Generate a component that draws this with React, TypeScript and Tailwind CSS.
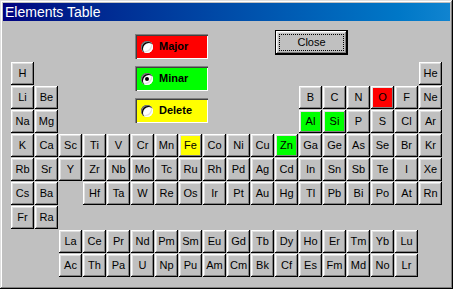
import React from 'react';

const RED = ['O'];
const GREEN = ['Al', 'Si', 'Zn'];
const YELLOW = ['Fe'];

const Cell = ({ sym }: { sym: string }) => {
  let bg = 'bg-[#c0c0c0]';
  if (RED.includes(sym)) bg = 'bg-[#ff0000]';
  if (GREEN.includes(sym)) bg = 'bg-[#00ff00]';
  if (YELLOW.includes(sym)) bg = 'bg-[#ffff00]';
  return (
    <div
      className={`w-[23px] h-[23px] shrink-0 flex items-center justify-center text-[11px] text-black ${bg} shadow-[inset_-1px_-1px_#000,inset_1px_1px_#fff,inset_-2px_-2px_#808080,inset_2px_2px_#dfdfdf]`}
    >
      {sym}
    </div>
  );
};

const Gap = () => <div className="w-[23px] h-[23px] shrink-0" />;

const Row = ({ items }: { items: string[] }) => (
  <div className="flex gap-[1px]">
    {items.map((s, i) => (s ? <Cell key={i} sym={s} /> : <Gap key={i} />))}
  </div>
);

const Choice = ({ label, bg, checked }: { label: string; bg: string; checked?: boolean }) => (
  <div
    className={`w-[73px] h-[25px] flex items-center pl-[6px] gap-[6px] ${bg} shadow-[inset_1px_1px_#808080,inset_2px_2px_#404040,inset_-1px_-1px_#fff]`}
  >
    <div className="w-[12px] h-[12px] rounded-full bg-white flex items-center justify-center shadow-[inset_1px_1px_#808080,inset_2px_2px_#000,inset_-1px_-1px_#fff,inset_-2px_-2px_#dfdfdf]">
      {checked && <div className="w-[4px] h-[4px] rounded-full bg-black" />}
    </div>
    <span className="text-[11px] font-bold text-black">{label}</span>
  </div>
);

export default function App() {
  return (
    <div
      className="w-[453px] h-[289px] bg-[#c0c0c0] p-[3px] flex flex-col shadow-[inset_-1px_-1px_#000,inset_1px_1px_#dfdfdf,inset_-2px_-2px_#808080,inset_2px_2px_#fff]"
      style={{ fontFamily: '"Liberation Sans", Arial, sans-serif' }}
    >
      {/* Title bar */}
      <div className="h-[18px] bg-gradient-to-r from-[#000080] to-[#1084d0] flex items-center pl-[2px]">
        <span className="text-[14px] text-white leading-none">Elements Table</span>
      </div>

      {/* Content */}
      <div className="flex-1 flex flex-col gap-[1px] px-[8px]">
        <div className="flex items-start">
          {/* Left block */}
          <div className="mt-[41px] flex flex-col gap-[1px]">
            <Row items={['H']} />
            <Row items={['Li', 'Be']} />
            <Row items={['Na', 'Mg']} />
          </div>

          {/* Choices */}
          <div className="ml-[77px] mt-[13px] flex flex-col gap-[7px]">
            <Choice label="Major" bg="bg-[#ff0000]" />
            <Choice label="Minar" bg="bg-[#00ff00]" checked />
            <Choice label="Delete" bg="bg-[#ffff00]" />
          </div>

          {/* Right area */}
          <div className="flex-1 flex flex-col">
            <div className="ml-[67px] mt-[9px] w-[73px] h-[25px] p-[1px] bg-black">
              <div className="w-full h-full p-[3px] bg-[#c0c0c0] shadow-[inset_-1px_-1px_#000,inset_1px_1px_#fff,inset_-2px_-2px_#808080,inset_2px_2px_#dfdfdf]">
                <div className="w-full h-full border border-dotted border-black flex items-center justify-center text-[11px] text-black">
                  Close
                </div>
              </div>
            </div>
            <div className="mt-[7px] flex flex-col items-end gap-[1px]">
              <Row items={['He']} />
              <Row items={['B', 'C', 'N', 'O', 'F', 'Ne']} />
              <Row items={['Al', 'Si', 'P', 'S', 'Cl', 'Ar']} />
            </div>
          </div>
        </div>

        <Row items={['K', 'Ca', 'Sc', 'Ti', 'V', 'Cr', 'Mn', 'Fe', 'Co', 'Ni', 'Cu', 'Zn', 'Ga', 'Ge', 'As', 'Se', 'Br', 'Kr']} />
        <Row items={['Rb', 'Sr', 'Y', 'Zr', 'Nb', 'Mo', 'Tc', 'Ru', 'Rh', 'Pd', 'Ag', 'Cd', 'In', 'Sn', 'Sb', 'Te', 'I', 'Xe']} />
        <Row items={['Cs', 'Ba', '', 'Hf', 'Ta', 'W', 'Re', 'Os', 'Ir', 'Pt', 'Au', 'Hg', 'Tl', 'Pb', 'Bi', 'Po', 'At', 'Rn']} />
        <Row items={['Fr', 'Ra']} />
        <div className="pl-[48px] flex flex-col gap-[1px]">
          <Row items={['La', 'Ce', 'Pr', 'Nd', 'Pm', 'Sm', 'Eu', 'Gd', 'Tb', 'Dy', 'Ho', 'Er', 'Tm', 'Yb', 'Lu']} />
          <Row items={['Ac', 'Th', 'Pa', 'U', 'Np', 'Pu', 'Am', 'Cm', 'Bk', 'Cf', 'Es', 'Fm', 'Md', 'No', 'Lr']} />
        </div>
      </div>
    </div>
  );
}
